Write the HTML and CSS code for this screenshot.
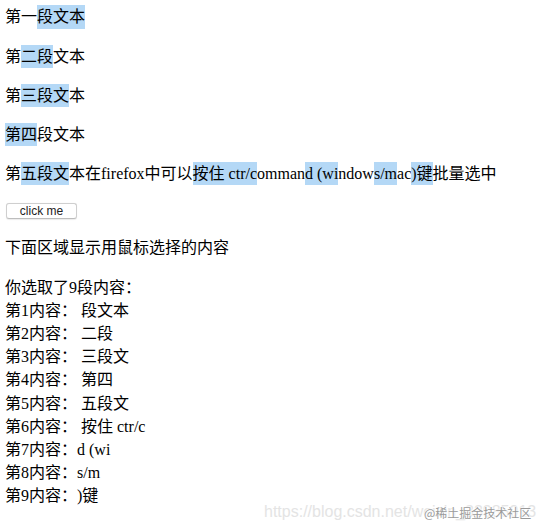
FILE: index.html
```html
<!DOCTYPE html>
<html lang="zh-CN">
<head>
<meta charset="utf-8">
<title>选区示例</title>
<link rel="stylesheet" href="styles.css">
</head>
<body>
<div class="page">
  <p class="para first">第一<span class="sel">段文本</span></p>
  <p class="para">第<span class="sel">二段</span>文本</p>
  <p class="para">第<span class="sel">三段文</span>本</p>
  <p class="para"><span class="sel">第四</span>段文本</p>
  <p class="para">第<span class="sel">五段文</span>本在firefox中可以<span class="sel">按住 ctr/c</span>omman<span class="sel">d (wi</span>ndow<span class="sel">s/m</span>ac<span class="sel">)键</span>批量选中</p>
  <div class="actions"><button class="btn" type="button">click me</button></div>
  <p class="para">下面区域显示用鼠标选择的内容</p>
  <div class="result">
    <div class="line">你选取了9段内容<span class="colon">：</span></div>
    <div class="line">第1内容<span class="colon">：</span> 段文本</div>
    <div class="line">第2内容<span class="colon">：</span> 二段</div>
    <div class="line">第3内容<span class="colon">：</span> 三段文</div>
    <div class="line">第4内容<span class="colon">：</span> 第四</div>
    <div class="line">第5内容<span class="colon">：</span> 五段文</div>
    <div class="line">第6内容<span class="colon">：</span> 按住 ctr/c</div>
    <div class="line">第7内容<span class="colon">：</span>d (wi</div>
    <div class="line">第8内容<span class="colon">：</span>s/m</div>
    <div class="line">第9内容<span class="colon">：</span>)键</div>
  </div>
</div>
<div class="watermark">
  <span class="wm-url">https://blog.csdn.net/weixin_33985913</span>
  <span class="wm-brand">@稀土掘金技术社区</span>
</div>
</body>
</html>
```

FILE: styles.css
```css
html, body {
  margin: 0;
  padding: 0;
  background: #ffffff;
}

body {
  font-family: "Liberation Serif", "Noto Sans CJK SC", serif;
  font-size: 16px;
  line-height: 23.2px;
  color: #000000;
  text-spacing-trim: space-all;
}

.page {
  padding: 5.4px 0 0 5px;
}

.para {
  margin: 16px 0;
}

.para.first {
  margin-top: 0;
}

.sel {
  display: inline-block;
  background: #b4d8f6;
  line-height: 23.2px;
}

.actions {
  margin: 18px 0 17px;
}

.btn {
  display: block;
  margin: 0 0 0 1px;
  width: 71px;
  height: 16px;
  padding: 0;
  border: 1px solid #cfcfcf;
  border-bottom-color: #bdbdbd;
  border-radius: 3px;
  background: #ffffff;
  box-shadow: 0 0.5px 1px rgba(0, 0, 0, 0.08);
  font-family: "Liberation Sans", Arial, sans-serif;
  font-size: 12px;
  line-height: 14px;
  color: #222222;
}

.result {
  margin: 0;
}

.line {
  white-space: pre;
}

.colon {
  display: inline-block;
  width: 16px;
  text-align: left;
}

.watermark {
  position: absolute;
  left: 264px;
  top: 502px;
  width: 280px;
  height: 22px;
}

.wm-url {
  position: absolute;
  left: 0;
  top: 0;
  font-family: "Liberation Sans", Arial, sans-serif;
  font-size: 16px;
  line-height: 20px;
  color: #e4e4e4;
  white-space: nowrap;
}

.wm-brand {
  position: absolute;
  left: 160px;
  top: 2px;
  font-family: "Noto Sans CJK SC", "Liberation Sans", sans-serif;
  font-size: 12px;
  line-height: 17px;
  color: #9a9a9a;
  white-space: nowrap;
  text-shadow: 0 0 2px #ffffff, 0 0 2px #ffffff, 0 0 3px #ffffff;
}
```
